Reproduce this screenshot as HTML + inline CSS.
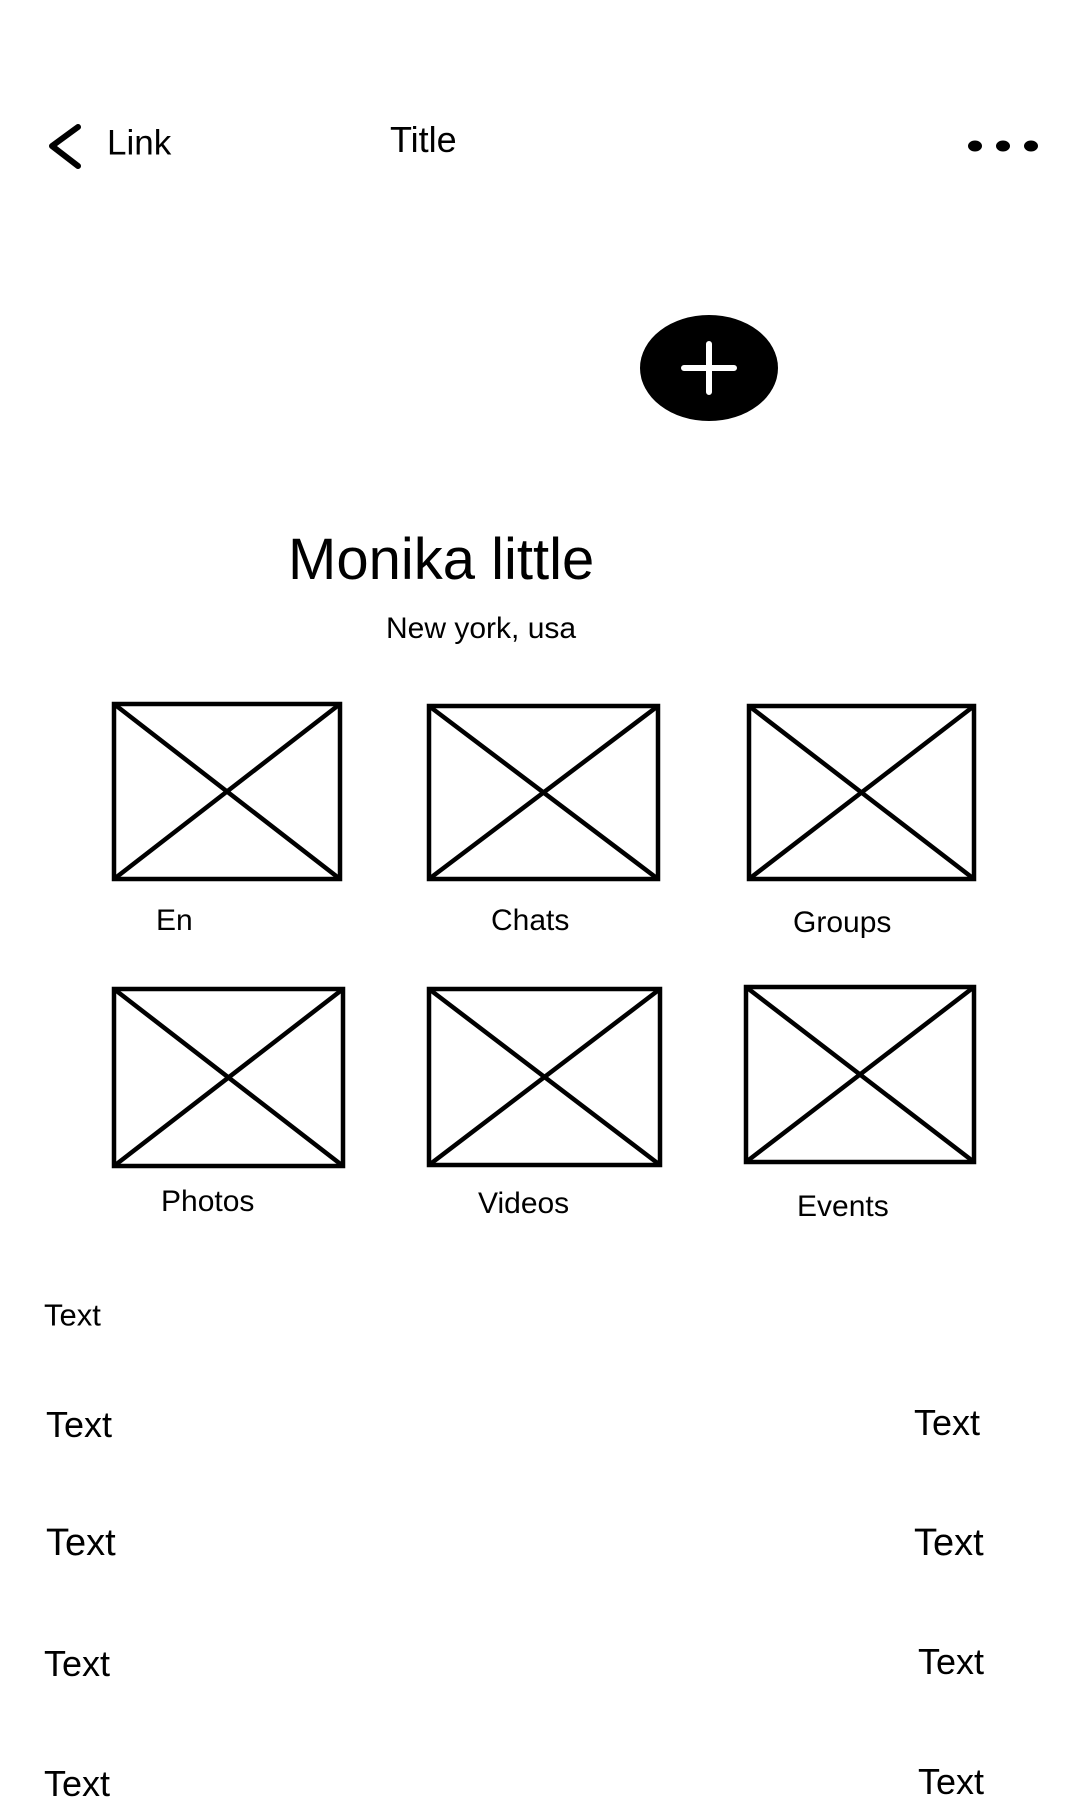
<!DOCTYPE html>
<html><head><meta charset="utf-8"><style>
html,body{margin:0;padding:0;background:#fff}
body{width:1080px;height:1800px;position:relative;overflow:hidden;font-family:"Liberation Sans",Arial,sans-serif;color:#000}
.t{position:absolute;white-space:nowrap;line-height:1;transform:translateY(-50%)}
svg{position:absolute;left:0;top:0}
</style></head><body>
<svg width="1080" height="1800" viewBox="0 0 1080 1800">
<path d="M78 127 L52 146 L78 166" fill="none" stroke="#000" stroke-width="6" stroke-linecap="round" stroke-linejoin="round"/>
<ellipse cx="975" cy="146" rx="7" ry="5.5"/><ellipse cx="1003" cy="146" rx="7" ry="5.5"/><ellipse cx="1031" cy="146" rx="7" ry="5.5"/>
<ellipse cx="709" cy="368" rx="69" ry="53"/>
<path d="M684 368 H734 M709 344 V392" stroke="#fff" stroke-width="6" stroke-linecap="round"/>
<g fill="none" stroke="#000" stroke-width="4.5">
<rect x="114" y="704" width="226" height="175"/><path d="M114 704 L340 879 M340 704 L114 879"/>
<rect x="429" y="706" width="229" height="173"/><path d="M429 706 L658 879 M658 706 L429 879"/>
<rect x="749" y="706" width="225" height="173"/><path d="M749 706 L974 879 M974 706 L749 879"/>
<rect x="114" y="989" width="229" height="177"/><path d="M114 989 L343 1166 M343 989 L114 1166"/>
<rect x="429" y="989" width="231" height="176"/><path d="M429 989 L660 1165 M660 989 L429 1165"/>
<rect x="746" y="987" width="228" height="175"/><path d="M746 987 L974 1162 M974 987 L746 1162"/>
</g>
</svg>
<div class="t" style="left:107px;top:143px;font-size:35px">Link</div>
<div class="t" style="left:390px;top:140px;font-size:36px">Title</div>
<div class="t" style="left:288px;top:560px;font-size:58px">Monika little</div>
<div class="t" style="left:386px;top:629px;font-size:30px">New york, usa</div>
<div class="t" style="left:156px;top:921px;font-size:30px">En</div>
<div class="t" style="left:491px;top:921px;font-size:30px">Chats</div>
<div class="t" style="left:793px;top:923px;font-size:30px">Groups</div>
<div class="t" style="left:161px;top:1202px;font-size:30px">Photos</div>
<div class="t" style="left:478px;top:1204px;font-size:30px">Videos</div>
<div class="t" style="left:797px;top:1207px;font-size:30px">Events</div>
<div class="t" style="left:44px;top:1315px;font-size:31px">Text</div>
<div class="t" style="left:46px;top:1425px;font-size:36px">Text</div>
<div class="t" style="left:914px;top:1423px;font-size:36px">Text</div>
<div class="t" style="left:46px;top:1543px;font-size:38px">Text</div>
<div class="t" style="left:914px;top:1543px;font-size:38px">Text</div>
<div class="t" style="left:44px;top:1664px;font-size:36px">Text</div>
<div class="t" style="left:918px;top:1662px;font-size:36px">Text</div>
<div class="t" style="left:44px;top:1784px;font-size:36px">Text</div>
<div class="t" style="left:918px;top:1782px;font-size:36px">Text</div>
</body></html>
